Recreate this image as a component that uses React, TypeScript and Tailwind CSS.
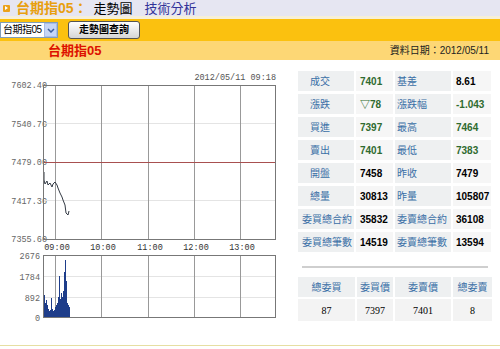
import React from "react";

const FONT = '"Liberation Sans","Noto Sans CJK TC",sans-serif';

type Row = [string, string, boolean, string, string, boolean];
const rows: Row[] = [
  ["成交", "7401", true, "基差", "8.61", false],
  ["漲跌", "▽78", true, "漲跌幅", "-1.043", true],
  ["買進", "7397", true, "最高", "7464", true],
  ["賣出", "7401", true, "最低", "7383", true],
  ["開盤", "7458", false, "昨收", "7479", false],
  ["總量", "30813", false, "昨量", "105807", false],
  ["委買總合約", "35832", false, "委賣總合約", "36108", false],
  ["委買總筆數", "14519", false, "委賣總筆數", "13594", false],
];

const pricePts: [number, number][] = [
  [44, 172], [44, 180], [45, 184], [47, 181], [48, 185], [50, 183], [52, 187], [53, 184],
  [55, 182], [57, 185], [58, 188], [60, 193], [62, 197], [63, 200], [65, 205], [66, 213],
  [68, 215], [69, 211],
];
const vols = [22, 14, 17, 12, 8, 6, 7, 19, 8, 6, 7, 10, 12, 14, 20, 41, 18, 24, 20, 26, 45, 57, 36, 14, 12, 10];
const vlines = [55.5, 101.5, 148.5, 194.5, 240.5];

function Chart() {
  const mono = '"Liberation Mono","DejaVu Sans Mono",monospace';
  return (
    <svg width={290} height={285} className="block">
      <text x={276} y={20} fontSize={8.5} fontFamily={mono} fill="#555" textAnchor="end">2012/05/11 09:18</text>
      {/* price axis labels */}
      {[
        ["7602.40", 25],
        ["7540.70", 63.5],
        ["7479.00", 102],
        ["7417.30", 140.5],
        ["7355.60", 179],
      ].map(([t, y]) => (
        <text key={t as string} x={47} y={(y as number) + 3} fontSize={8.5} fontFamily={mono} fill="#666" textAnchor="end">{t}</text>
      ))}
      <rect x={43.5} y={25.5} width={232} height={154} fill="none" />
      <line x1={44} x2={275} y1={63.5} y2={63.5} stroke="#e4e4e4" />
      <line x1={44} x2={275} y1={140.5} y2={140.5} stroke="#e4e4e4" />
      {vlines.map((x) => (
        <line key={x} x1={x} x2={x} y1={26} y2={179} stroke="#999" />
      ))}
      <line x1={44} x2={275} y1={102.5} y2={102.5} stroke="#a85050" />
      <polyline points={pricePts.map(([x, y]) => `${x},${y - 60}`).join(" ")} fill="none" stroke="#333a44" strokeWidth={1} />
      <rect x={43.5} y={25.5} width={232} height={154} fill="none" stroke="#777" />
      {/* time labels */}
      {["09:00", "10:00", "11:00", "12:00", "13:00"].map((t, i) => (
        <text key={t} x={vlines[i] + 1.5} y={190} fontSize={8.5} fontFamily={mono} fill="#333" textAnchor="middle">{t}</text>
      ))}
      {/* volume */}
      {[
        ["2676", 196],
        ["1784", 217],
        ["892", 237.5],
        ["0", 258],
      ].map(([t, y]) => (
        <text key={t as string} x={40} y={(y as number) + 3} fontSize={8.5} fontFamily={mono} fill="#666" textAnchor="end">{t}</text>
      ))}
      <line x1={44} x2={275} y1={216.5} y2={216.5} stroke="#e4e4e4" />
      <line x1={44} x2={275} y1={237.5} y2={237.5} stroke="#e4e4e4" />
      {vlines.map((x) => (
        <line key={"v" + x} x1={x} x2={x} y1={196} y2={257} stroke="#999" />
      ))}
      {vols.map((h, i) => (
        <rect key={i} x={44 + i} y={257 - h} width={1} height={h} fill="#1e3d8a" />
      ))}
      <rect x={43.5} y={195.5} width={232} height={62} fill="none" stroke="#777" />
    </svg>
  );
}

export default function App() {
  return (
    <div className="w-[500px] h-[349px] bg-white overflow-hidden relative" style={{ fontFamily: FONT }}>
      {/* title bar */}
      <div className="h-[16px] bg-[#e6e6f2] flex items-center">
        <div className="ml-[3px] w-[7px] h-[7px] bg-[#eba21a] rounded-[1px] flex items-center justify-center">
          <div className="w-0 h-0 border-y-[2px] border-y-transparent border-l-[3px] border-l-white" />
        </div>
        <span className="ml-[6px] text-[14px] font-bold text-[#e8a010] leading-none">台期指05：</span>
        <span className="ml-[6px] text-[13px] text-black leading-none">走勢圖</span>
        <span className="ml-[12px] text-[13px] text-[#333399] leading-none">技術分析</span>
      </div>
      <div className="h-[3px] bg-[#f6efd9]" />
      {/* toolbar */}
      <div className="h-[22px] bg-[#fbc10f] flex items-center">
        <div className="ml-0 w-[58px] h-[16px] bg-white border border-[#7f9db9] flex items-center">
          <span className="text-[10px] leading-none pl-[2px] flex-1 text-black tracking-[-0.5px]">台期指05</span>
          <div className="w-[13px] h-[14px] bg-[#c6d6f6] border border-[#a8bde8] flex items-center justify-center">
            <svg width="8" height="5" viewBox="0 0 8 5"><path d="M1 1 L4 4 L7 1" stroke="#3d5f9e" strokeWidth="1.5" fill="none" /></svg>
          </div>
        </div>
        <div className="ml-[10px] w-[72px] h-[18px] rounded-[3px] border border-[#555] bg-gradient-to-b from-white to-[#d6d6d6] flex items-center justify-center">
          <span className="text-[10px] font-bold leading-none text-black">走勢圖查詢</span>
        </div>
      </div>
      {/* sub header */}
      <div className="h-[19px] bg-[#fdd775] flex items-center justify-between">
        <span className="ml-[48px] text-[13px] font-bold text-[#dd1100] leading-none">台期指05</span>
        <span className="mr-[11px] text-[10px] text-[#222] leading-none">資料日期：2012/05/11</span>
      </div>
      {/* content */}
      <div className="flex h-[285px]">
        <div className="w-[298px]">
          <Chart />
        </div>
        <div className="pt-[11px] flex flex-col">
          <div className="grid grid-cols-[56px_37px_56px_38px] gap-x-[2px] gap-y-[3px]">
            {rows.map((r) => (
              <React.Fragment key={r[0]}>
                <div className={`h-[20px] bg-[#eef0f1] flex items-center text-[10px] text-[#3a6fa6] ${r[0].length > 2 ? "pl-[4px]" : "pl-[12px]"}`}>{r[0]}</div>
                <div className={`h-[20px] bg-[#f6f6f6] flex items-center pl-[4px] text-[10px] font-bold ${r[2] ? "text-[#2f6b2f]" : "text-black"}`}>{r[1]}</div>
                <div className="h-[20px] bg-[#eef0f1] flex items-center pl-[2px] text-[10px] text-[#3a6fa6]">{r[3]}</div>
                <div className={`h-[20px] bg-[#f6f6f6] flex items-center pl-[3px] text-[10px] font-bold ${r[5] ? "text-[#2f6b2f]" : "text-black"}`}>{r[4]}</div>
              </React.Fragment>
            ))}
          </div>
          <div className="mt-[14px] ml-[4px] w-[186px] h-[2px] bg-[#cfcfcf]" />
          <div className="mt-[9px] grid grid-cols-[57px_36px_56px_39px] gap-x-[2px] gap-y-[2px]">
            {["總委買", "委買價", "委賣價", "總委賣"].map((h) => (
              <div key={h} className="h-[20px] bg-[#eef0f1] flex items-center justify-center text-[10px] text-[#3a6fa6]">{h}</div>
            ))}
            {["87", "7397", "7401", "8"].map((v, i) => (
              <div key={i} className="h-[22px] bg-[#f3f3f3] flex items-center justify-center text-[10px] text-black" style={{ fontFamily: '"Liberation Serif",serif' }}>{v}</div>
            ))}
          </div>
        </div>
      </div>
      <div className="h-[1px] bg-[#e6dfa2]" />
    </div>
  );
}
